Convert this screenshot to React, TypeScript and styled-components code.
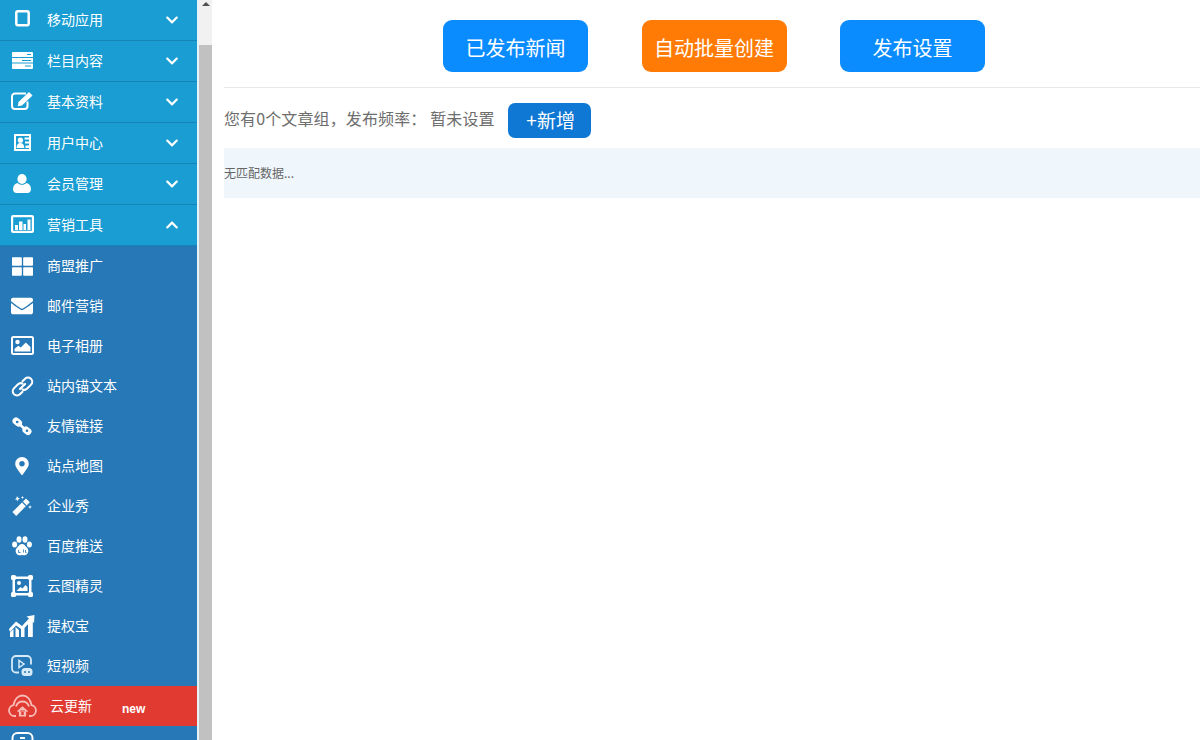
import React from "react";
import styled, { createGlobalStyle } from "styled-components";
import { FaThLarge, FaEnvelope, FaMapMarkerAlt, FaChevronDown, FaChevronUp } from "react-icons/fa";

const Global = createGlobalStyle`
  html, body { margin: 0; padding: 0; height: 740px; overflow: hidden; background: #fff; }
  body { font-family: "Noto Sans CJK SC", "Liberation Sans", sans-serif; }
  * { box-sizing: border-box; }
`;

const Page = styled.div`
  display: flex;
  width: 1200px;
  height: 740px;
  overflow: hidden;
`;
const Sidebar = styled.nav`
  width: 197px;
  height: 740px;
  flex: none;
  overflow: hidden;
  background: #2678b6;
`;
const GroupRow = styled.div`
  display: flex;
  align-items: center;
  height: 41px;
  background: #199dd2;
  border-bottom: 1px solid #1684b8;
  color: #fff;
  font-size: 14px;
  padding-right: 18px;
`;
const SubRow = styled.div<{ $red?: boolean }>`
  display: flex;
  align-items: center;
  height: 40px;
  background: ${(p) => (p.$red ? "#e03a31" : "#2678b6")};
  color: #fff;
  font-size: 14px;
`;
const IconSlot = styled.span`
  width: 44px;
  flex: none;
  margin-right: 3px;
  display: flex;
  align-items: center;
  justify-content: center;
  color: #fff;
`;
const RowLabel = styled.span<{ $shift?: boolean }>`
  width: 56px;
  padding-bottom: 2px;
  white-space: nowrap;
  margin-left: ${(p) => (p.$shift ? "3px" : "0")};
`;
const Chevron = styled.span`
  margin-left: auto;
  display: flex;
  align-items: center;
`;
const NewTag = styled.span`
  margin: 6px 0 0 16px;
  font: bold 12px "Liberation Sans", sans-serif;
  color: #fff;
`;
const Gutter = styled.div`
  width: 2px;
  flex: none;
  background: #e6f3fb;
`;
const Scrollbar = styled.div`
  width: 13px;
  flex: none;
  display: flex;
  flex-direction: column;
  align-items: center;
  background: #f1f1f1;
`;
const ArrowBox = styled.div`
  height: 45px;
  flex: none;
  padding-top: 2px;
  width: 100%;
  display: flex;
  justify-content: center;
`;
const Arrow = styled.span`
  width: 0;
  height: 0;
  border-left: 4px solid transparent;
  border-right: 4px solid transparent;
  border-bottom: 4px solid #505050;
`;
const Thumb = styled.div`
  flex: 1;
  width: 100%;
  background: #c1c1c1;
`;
const Main = styled.main`
  flex: 1;
  min-width: 0;
  margin-left: 12px;
`;
const Toolbar = styled.div`
  display: flex;
  justify-content: center;
  gap: 53.5px;
  padding: 20px 0 15px 4px;
  border-bottom: 1px solid #e8e8e8;
`;
const BigButton = styled.button<{ $orange?: boolean }>`
  width: 145px;
  height: 52px;
  padding: 2px 0 0;
  border: 0;
  border-radius: 9px;
  background: ${(p) => (p.$orange ? "#ff7b06" : "#0a8cff")};
  color: #fff;
  font: 400 20px "Noto Sans CJK SC", sans-serif;
`;
const InfoRow = styled.div`
  display: flex;
  align-items: center;
  margin-top: 15px;
  height: 35px;
  color: #6e6e6e;
  font-size: 16px;
  white-space: pre;
`;
const InfoText = styled.span`
  padding-bottom: 5px;
  letter-spacing: 0.12px;
`;
const AddButton = styled.button`
  width: 83px;
  height: 35px;
  margin-left: 13px;
  padding: 0 0 3px 3px;
  border: 0;
  border-radius: 7px;
  background: #0f78d4;
  color: #fff;
  font: 400 19px "Noto Sans CJK SC", sans-serif;
`;
const EmptyRow = styled.div`
  display: flex;
  align-items: center;
  height: 50px;
  margin-top: 10px;
  padding-bottom: 2px;
  background: #eff6fc;
  color: #666;
  font-size: 12px;
`;

const Tablet = () => (
  <svg width="15" height="17" viewBox="0 0 15 17" fill="none" stroke="#fff" strokeWidth="2.5" style={{ marginBottom: 3 }}>
    <rect x="1.3" y="1.3" width="12.4" height="13.9" rx="1.6" />
  </svg>
);
const ServerBars = () => (
  <svg width="21" height="17" viewBox="0 0 21 17" fill="#fff" style={{ marginBottom: 2 }}>
    <path d="M0 1a1 1 0 0 1 1-1h19a1 1 0 0 1 1 1v4H0zM0 6h21v4.500H0zM0 11.500h21V16a1 1 0 0 1-1 1H1a1 1 0 0 1-1-1z" />
    <path d="M15 2h4v1h-4zM10 8h9v1h-9zM13 13.500h6v1h-6z" fill="#199dd2" />
  </svg>
);
const EditBox = () => (
  <svg width="22" height="18" viewBox="0 0 22 18" style={{ marginBottom: 2 }}>
    <path fill="none" stroke="#fff" strokeWidth="2" d="M15 1.500H4A3 3 0 0 0 1 4.500V14a3 3 0 0 0 3 3h9.500a3 3 0 0 0 3-3V9.500" />
    <path fill="#fff" d="M18 0l3.500 3.500L11 13.500l-4.200.8.700-4.300z" />
  </svg>
);
const Contact = () => (
  <svg width="17" height="17" viewBox="0 0 17 17" style={{ marginBottom: 2 }}>
    <path fill="#fff" fillRule="evenodd" d="M0 0h17v17H0zM2 2v13h13V2z" />
    <circle cx="6.400" cy="6.200" r="2.600" fill="#fff" />
    <path fill="#fff" d="M2.500 14c0-3.500 1.800-5 3.900-5s3.900 1.500 3.900 5zM10.500 3.500H15v2h-4.500zM11 7.500h4v2h-4zM11.500 11.500h3.500v2.500h-3.500z" />
  </svg>
);
const UserSolid = () => (
  <svg width="18" height="19" viewBox="0 0 18 19" fill="#fff" style={{ marginBottom: 2 }}>
    <ellipse cx="9" cy="5" rx="4.600" ry="5" />
    <path d="M0 15c0-3.500 2-5.500 4.500-6 1.200 1.200 2.800 1.800 4.500 1.800s3.300-.6 4.500-1.800c2.500.5 4.500 2.500 4.500 6 0 2.800-1.500 4-3.500 4h-11C1.500 19 0 17.800 0 15z" />
  </svg>
);
const ChartBox = () => (
  <svg width="23" height="18" viewBox="0 0 23 18" style={{ marginBottom: 2 }}>
    <path fill="#fff" fillRule="evenodd" d="M2 0h19a2 2 0 0 1 2 2v14a2 2 0 0 1-2 2H2a2 2 0 0 1-2-2V2a2 2 0 0 1 2-2zM2.200 2.200v13.600h18.600V2.200z" />
    <path fill="#fff" d="M4 10h3v5H4zM8 6.500h3.500V15H8zM12.500 9H15v6h-2.500zM16.500 4.500H19.500V15h-3z" />
  </svg>
);
const PictureBox = () => (
  <svg width="23" height="19" viewBox="0 0 23 19" style={{ marginBottom: 2 }}>
    <rect x="1" y="1" width="21" height="17" rx="1.500" fill="none" stroke="#fff" strokeWidth="2" />
    <circle cx="6.500" cy="6" r="2.200" fill="#fff" />
    <path fill="#fff" d="M3.500 15.500v-2.800l3.800-3 2.500 1.800 5-5 4.700 4.500v4.500z" />
  </svg>
);
const LinkOutline = () => (
  <svg width="23" height="23" viewBox="0 0 22 22" fill="none" stroke="#fff" strokeWidth="2" strokeLinecap="round">
    <path d="M8.500 13.500l5-5" />
    <path d="M11 6l2.500-2.500a4 4 0 0 1 5.500 0l.2.2a4 4 0 0 1 0 5.500L15.500 13a4 4 0 0 1-4.500.8" />
    <path d="M11 16l-2.500 2.500a4 4 0 0 1-5.500 0l-.2-.2a4 4 0 0 1 0-5.500L6.500 9a4 4 0 0 1 4.500-.8" />
  </svg>
);
const ChainLink = () => (
  <svg width="20" height="19" viewBox="0 0 20 19">
    <path fill="none" stroke="#fff" strokeWidth="7" strokeLinecap="round" d="M4 4l2.500 2M14 13l2 1.500" />
    <path fill="none" stroke="#fff" strokeWidth="2.500" d="M8 7.500l4 4" />
    <circle cx="5.200" cy="5" r="1.300" fill="#2678b6" />
    <circle cx="15" cy="13.800" r="1.300" fill="#2678b6" />
  </svg>
);
const Wand = () => (
  <svg width="20" height="20" viewBox="0 0 20 20" fill="#fff">
    <path d="M14 2.500l3.800 3.800L4.200 19.900.4 16.100z" />
    <path d="M10.900 5.600l3.800 3.800-.9.900-3.800-3.800z" fill="#2678b6" />
    <path d="M5 0l1 1.800L8 2.300 6.200 3.400 6 5.400 4.800 3.700 3 3.400 4.500 2zM18 9l.6 1.400 1.400.6-1.400.6-.6 1.400-.6-1.400-1.400-.6 1.400-.6zM10.500 0l.5 1 1 .5-1 .5-.5 1-.5-1-1-.5 1-.5z" />
  </svg>
);
const Paw = () => (
  <svg width="20" height="20" viewBox="0 0 20 20" fill="#fff">
    <ellipse cx="7" cy="3.500" rx="2.500" ry="3.300" />
    <ellipse cx="13" cy="3.500" rx="2.500" ry="3.300" />
    <ellipse cx="2.600" cy="8.500" rx="2.500" ry="3" />
    <ellipse cx="17.400" cy="8.500" rx="2.500" ry="3" />
    <path d="M10 8c2.800 0 3.400 2.400 5.300 4 1.700 1.500 1.500 6.500-2.300 7.300-1.200.2-2-.4-3-.4s-1.800.6-3 .4C3.200 18.500 3 13.500 4.700 12 6.600 10.400 7.200 8 10 8z" />
    <path d="M6.500 14v2.500h2M11.500 13.500v3M13.500 14v2.500h1" fill="none" stroke="#2678b6" strokeWidth="0.8" />
  </svg>
);
const FrameImage = () => (
  <svg width="22" height="22" viewBox="0 0 22 22">
    <g fill="#fff">
      <rect x="0" y="0" width="5" height="5" rx="1.500" />
      <rect x="17" y="0" width="5" height="5" rx="1.500" />
      <rect x="0" y="17" width="5" height="5" rx="1.500" />
      <rect x="17" y="17" width="5" height="5" rx="1.500" />
      <path d="M1.500 4h2.500v14H1.500zM18 4h2.500v14H18zM4 1.500h14V4H4zM4 18h14v2.500H4z" />
      <circle cx="8" cy="8" r="2" />
      <path d="M5.500 16l4-4 2 1.500 3-3.500 2 2v4z" />
    </g>
  </svg>
);
const Growth = () => (
  <svg width="26" height="22" viewBox="0 0 26 22" fill="#fff">
    <path d="M1 22v-4.500l3.500-3.500v8zM6.500 22V12l3.500 3v7zM12 22v-9l3.500-3.500V22zM19 22V7.500l3.800-3.500h1V22z" />
    <path d="M0 14L7 6.500l6 4.500L20 3.500 17.500 1.500 25.500 0 25 8l-2.500-2.500-9 9.500L7 10.500 1 17z" />
  </svg>
);
const VideoBadge = () => (
  <svg width="23" height="22" viewBox="0 0 23 22" fill="none" stroke="#d6eafa" strokeWidth="1.800">
    <path d="M8 17.500H5a4 4 0 0 1-4-4V5a4 4 0 0 1 4-4h11a4 4 0 0 1 4 4v4.500" />
    <path d="M8 5.500v7l5-3.500z" strokeWidth="1.500" />
    <rect x="10.500" y="13" width="11" height="8" rx="3.500" fill="#d6eafa" stroke="none" />
    <circle cx="14" cy="17" r="1" fill="#2678b6" stroke="none" />
    <circle cx="18" cy="17" r="1" fill="#2678b6" stroke="none" />
  </svg>
);
const CloudHome = () => (
  <svg width="29" height="24" viewBox="0 0 29 23" fill="none" stroke="#f8bdb8" strokeWidth="1.800">
    <path d="M8 21.500H6.500a5.500 5.500 0 0 1-1-10.900C6.500 5 10 1 14.500 1s8 4 9 9.600a5.500 5.500 0 0 1-1 10.900H21" />
    <path d="M8 12c1-3 3.500-5 6.500-5s5.500 2 6.500 5" />
    <path d="M9.500 17l5-4.500 5 4.500M11.500 16v5.500h6V16" fill="#f8bdb8" strokeWidth="1.200" />
    <rect x="13.300" y="17.500" width="2.400" height="3" fill="#e03a31" stroke="none" />
  </svg>
);
const PartialBadge = () => (
  <svg width="23" height="28" viewBox="0 0 23 28" fill="none" stroke="#fff" strokeWidth="2">
    <rect x="1.500" y="1" width="20" height="26" rx="5" />
    <path d="M9 6h5" />
  </svg>
);

const groups = [
  { label: "移动应用", icon: <Tablet /> },
  { label: "栏目内容", icon: <ServerBars /> },
  { label: "基本资料", icon: <EditBox /> },
  { label: "用户中心", icon: <Contact /> },
  { label: "会员管理", icon: <UserSolid /> },
  { label: "营销工具", icon: <ChartBox />, open: true },
];
const subs = [
  { label: "商盟推广", icon: <FaThLarge size={21} /> },
  { label: "邮件营销", icon: <FaEnvelope size={22} /> },
  { label: "电子相册", icon: <PictureBox /> },
  { label: "站内锚文本", icon: <LinkOutline /> },
  { label: "友情链接", icon: <ChainLink /> },
  { label: "站点地图", icon: <FaMapMarkerAlt size={18} /> },
  { label: "企业秀", icon: <Wand /> },
  { label: "百度推送", icon: <Paw /> },
  { label: "云图精灵", icon: <FrameImage /> },
  { label: "提权宝", icon: <Growth /> },
  { label: "短视频", icon: <VideoBadge /> },
];

export default function App() {
  return (
    <Page>
      <Global />
      <Sidebar>
        {groups.map((g) => (
          <GroupRow key={g.label}>
            <IconSlot>{g.icon}</IconSlot>
            <RowLabel>{g.label}</RowLabel>
            <Chevron>{g.open ? <FaChevronUp size={14} /> : <FaChevronDown size={14} />}</Chevron>
          </GroupRow>
        ))}
        {subs.map((s) => (
          <SubRow key={s.label}>
            <IconSlot>{s.icon}</IconSlot>
            <RowLabel>{s.label}</RowLabel>
          </SubRow>
        ))}
        <SubRow $red>
          <IconSlot><CloudHome /></IconSlot>
          <RowLabel $shift>云更新</RowLabel>
          <NewTag>new</NewTag>
        </SubRow>
        <SubRow>
          <IconSlot><PartialBadge /></IconSlot>
        </SubRow>
      </Sidebar>
      <Gutter />
      <Scrollbar>
        <ArrowBox><Arrow /></ArrowBox>
        <Thumb />
      </Scrollbar>
      <Main>
        <Toolbar>
          <BigButton>已发布新闻</BigButton>
          <BigButton $orange>自动批量创建</BigButton>
          <BigButton>发布设置</BigButton>
        </Toolbar>
        <InfoRow>
          <InfoText>您有0个文章组，发布频率： 暂未设置</InfoText>
          <AddButton>+新增</AddButton>
        </InfoRow>
        <EmptyRow>无匹配数据...</EmptyRow>
      </Main>
    </Page>
  );
}
